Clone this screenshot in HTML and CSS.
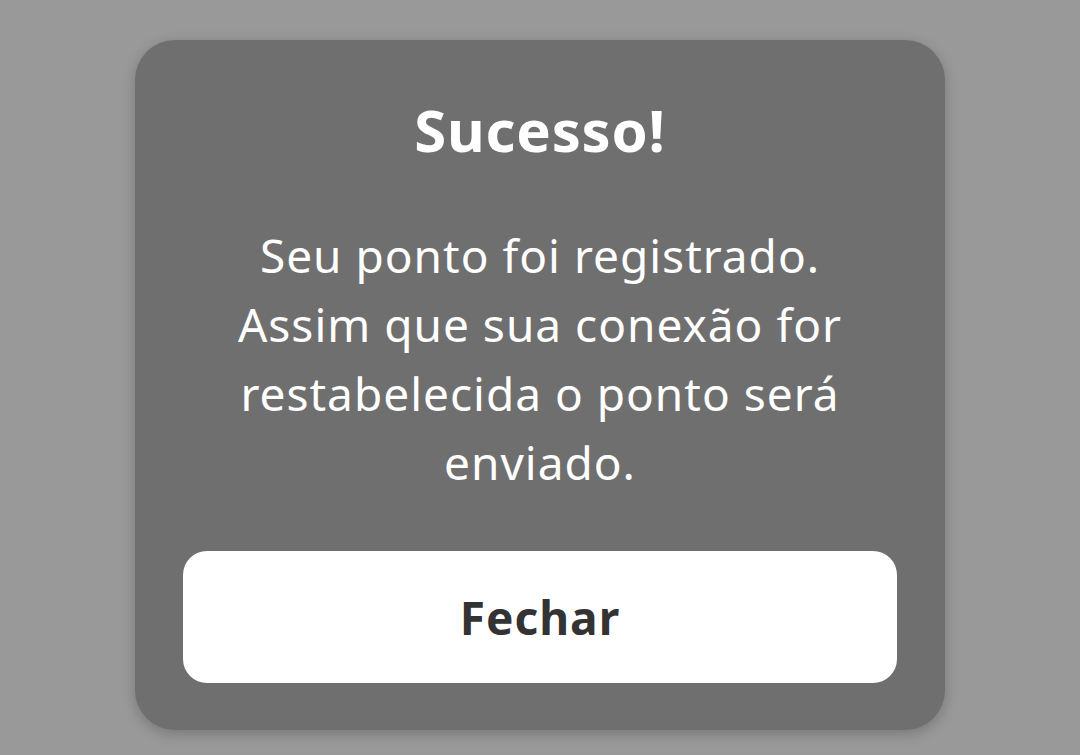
FILE: index.html
```html
<!DOCTYPE html>
<html lang="pt-BR">
<head>
    <meta charset="UTF-8">
    <meta name="viewport" content="width=device-width, initial-scale=1.0">
    <title>Sucesso</title>
    <link rel="stylesheet" href="styles.css">
</head>
<body>
<div class="overlay">
    <div class="modal">
        <h1 class="modal-title">Sucesso!</h1>
        <p class="modal-text">Seu ponto foi registrado.<br>Assim que sua conexão for restabelecida o ponto será enviado.</p>
        <button class="modal-button">Fechar</button>
    </div>
</div>
</body>
</html>
```

FILE: styles.css
```css
html, body {
    margin: 0;
    padding: 0;
    height: 100%;
}
body {
    font-family: "Noto Sans", "Open Sans", sans-serif;
    background-color: #999999;
}
.overlay {
    display: flex;
    justify-content: center;
    padding-top: 40px;
}
.modal {
    width: 810px;
    box-sizing: border-box;
    padding: 50px 48px 47px;
    background: #6f6f6f;
    border-radius: 40px;
    box-shadow: 0 4px 14px rgba(0, 0, 0, 0.22);
    display: flex;
    flex-direction: column;
    align-items: stretch;
}
.modal-title {
    margin: 0;
    font-size: 58px;
    line-height: 80px;
    font-weight: 700;
    letter-spacing: 0.8px;
    color: #fff;
    text-align: center;
}
.modal-text {
    margin: 51px 0 0;
    font-size: 46px;
    line-height: 69px;
    letter-spacing: 1px;
    color: #fff;
    text-align: center;
}
.modal-button {
    margin-top: 54px;
    height: 132px;
    border: none;
    border-radius: 24px;
    background: #fff;
    color: #333;
    font-family: inherit;
    font-size: 46px;
    font-weight: 700;
    letter-spacing: 1px;
    cursor: pointer;
}
```
